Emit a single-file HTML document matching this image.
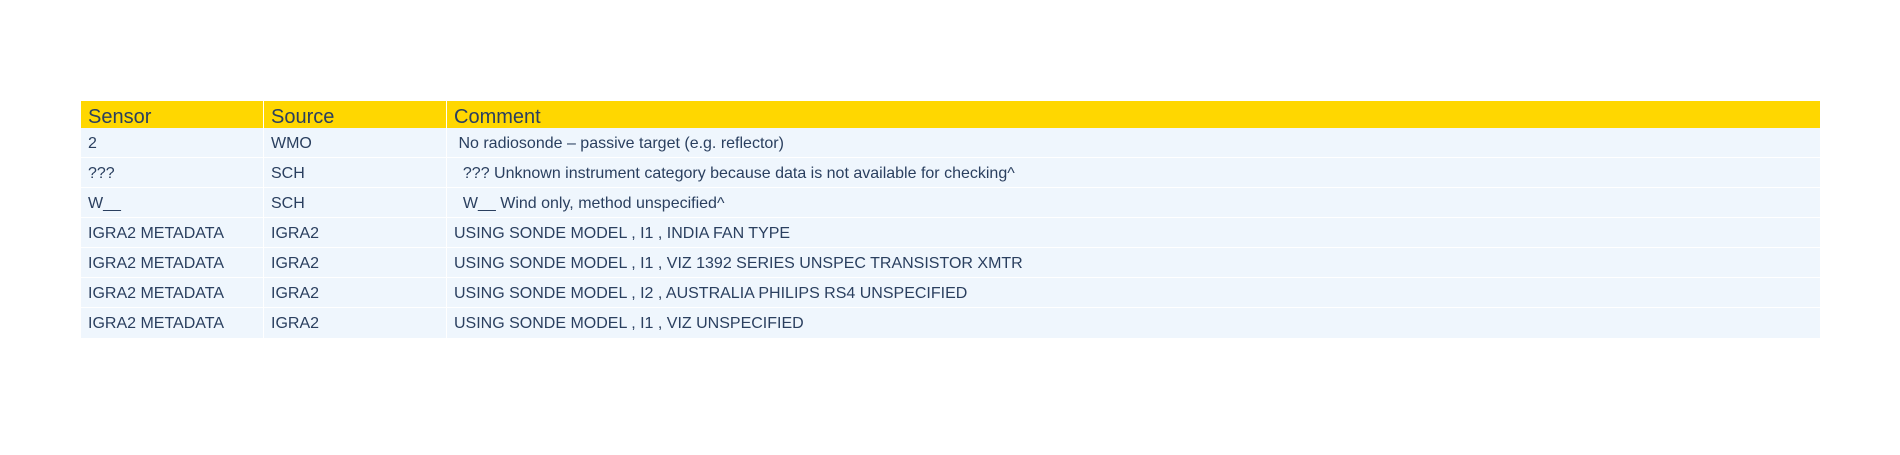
<!DOCTYPE html>
<html><head><style>
body{margin:0;width:1900px;height:455px;background:#fff;font-family:"Liberation Sans",Arial,sans-serif;color:#2a3f5f;position:relative;overflow:hidden}
.c{position:absolute;box-sizing:border-box;padding-left:7px;white-space:pre;overflow:hidden}
.h{background:#ffd700;font-size:20px;line-height:28px;top:101px;height:27px;padding-top:2px}
.r{background:#eff6fd;font-size:16px;line-height:29px;height:29px;padding-top:1px}
</style></head><body>
<div class="c h" style="left:81px;width:182px">Sensor</div>
<div class="c h" style="left:264px;width:182px">Source</div>
<div class="c h" style="left:447px;width:1373px">Comment</div>

<div class="c r" style="left:81px;width:182px;top:128px">2</div>
<div class="c r" style="left:264px;width:182px;top:128px">WMO</div>
<div class="c r" style="left:447px;width:1373px;top:128px"> No radiosonde – passive target (e.g. reflector)</div>

<div class="c r" style="left:81px;width:182px;top:158px">???</div>
<div class="c r" style="left:264px;width:182px;top:158px">SCH</div>
<div class="c r" style="left:447px;width:1373px;top:158px">  ??? Unknown instrument category because data is not available for checking^</div>

<div class="c r" style="left:81px;width:182px;top:188px">W__</div>
<div class="c r" style="left:264px;width:182px;top:188px">SCH</div>
<div class="c r" style="left:447px;width:1373px;top:188px">  W__ Wind only, method unspecified^</div>

<div class="c r" style="left:81px;width:182px;top:218px">IGRA2 METADATA</div>
<div class="c r" style="left:264px;width:182px;top:218px">IGRA2</div>
<div class="c r" style="left:447px;width:1373px;top:218px">USING SONDE MODEL , I1 , INDIA FAN TYPE</div>

<div class="c r" style="left:81px;width:182px;top:248px">IGRA2 METADATA</div>
<div class="c r" style="left:264px;width:182px;top:248px">IGRA2</div>
<div class="c r" style="left:447px;width:1373px;top:248px">USING SONDE MODEL , I1 , VIZ 1392 SERIES UNSPEC TRANSISTOR XMTR</div>

<div class="c r" style="left:81px;width:182px;top:278px">IGRA2 METADATA</div>
<div class="c r" style="left:264px;width:182px;top:278px">IGRA2</div>
<div class="c r" style="left:447px;width:1373px;top:278px">USING SONDE MODEL , I2 , AUSTRALIA PHILIPS RS4 UNSPECIFIED</div>

<div class="c r" style="left:81px;width:182px;top:308px;height:30px">IGRA2 METADATA</div>
<div class="c r" style="left:264px;width:182px;top:308px;height:30px">IGRA2</div>
<div class="c r" style="left:447px;width:1373px;top:308px;height:30px">USING SONDE MODEL , I1 , VIZ UNSPECIFIED</div>
</body></html>
